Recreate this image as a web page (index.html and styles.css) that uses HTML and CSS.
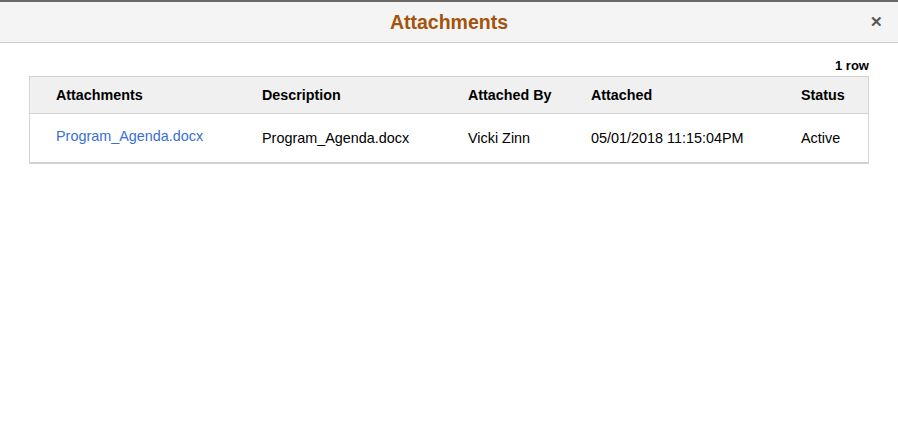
FILE: index.html
```html
<!DOCTYPE html>
<html>
<head>
<meta charset="utf-8">
<link rel="stylesheet" href="styles.css">
</head>
<body>
<div class="modal">
  <header class="modal-head">
    <h1 class="modal-title">Attachments</h1>
    <span class="close" aria-label="Close">&#x2715;</span>
  </header>
  <main class="modal-body">
    <div class="count">1 row</div>
    <div class="grid">
      <div class="row head">
        <div class="cell">Attachments</div>
        <div class="cell">Description</div>
        <div class="cell">Attached By</div>
        <div class="cell">Attached</div>
        <div class="cell">Status</div>
      </div>
      <div class="row data">
        <div class="cell"><a class="link" href="#">Program_Agenda.docx</a></div>
        <div class="cell">Program_Agenda.docx</div>
        <div class="cell">Vicki Zinn</div>
        <div class="cell">05/01/2018 11:15:04PM</div>
        <div class="cell">Active</div>
      </div>
    </div>
  </main>
</div>
</body>
</html>
```
FILE: styles.css
```css
html, body {
  margin: 0;
  padding: 0;
  background: #ffffff;
}
body {
  font-family: Arial, "Liberation Sans", sans-serif;
  color: #000;
  width: 898px;
  height: 444px;
  overflow: hidden;
}
.modal {
  border-top: 2px solid #6a6a6a;
}
.modal-head {
  position: relative;
  height: 40px;
  background: #f4f4f4;
  border-bottom: 1px solid #cccccc;
  display: flex;
  align-items: center;
  justify-content: center;
}
.modal-title {
  margin: 0;
  font-size: 19.5px;
  font-weight: bold;
  color: #a3530e;
  line-height: 38px;
}
.close {
  position: absolute;
  right: 15px;
  top: 10px;
  font-size: 15px;
  font-weight: bold;
  color: #555;
  line-height: 20px;
}
.modal-body {
  padding: 15px 29px 0 29px;
}
.count {
  text-align: right;
  font-size: 13px;
  font-weight: bold;
  line-height: 16px;
  margin-right: 0;
  margin-bottom: 2px;
}
.grid {
  border: 1px solid #d4d4d4;
  border-bottom: 2px solid #d2d2d2;
}
.row {
  display: grid;
  grid-template-columns: 232px 206px 123px 210px 1fr;
  align-items: center;
}
.row .cell:first-child {
  padding-left: 26px;
}
.head {
  height: 37px;
  background: #f0f0f0;
  border-bottom: 1px solid #d4d4d4;
  font-weight: bold;
  font-size: 14.3px;
  padding-bottom: 0;
  box-sizing: border-box;
}
.data {
  height: 48px;
  font-size: 14.4px;
  padding-bottom: 1px;
  box-sizing: border-box;
}
.link {
  color: #3a6fd6;
  text-decoration: none;
  position: relative;
  top: -2px;
}
```
